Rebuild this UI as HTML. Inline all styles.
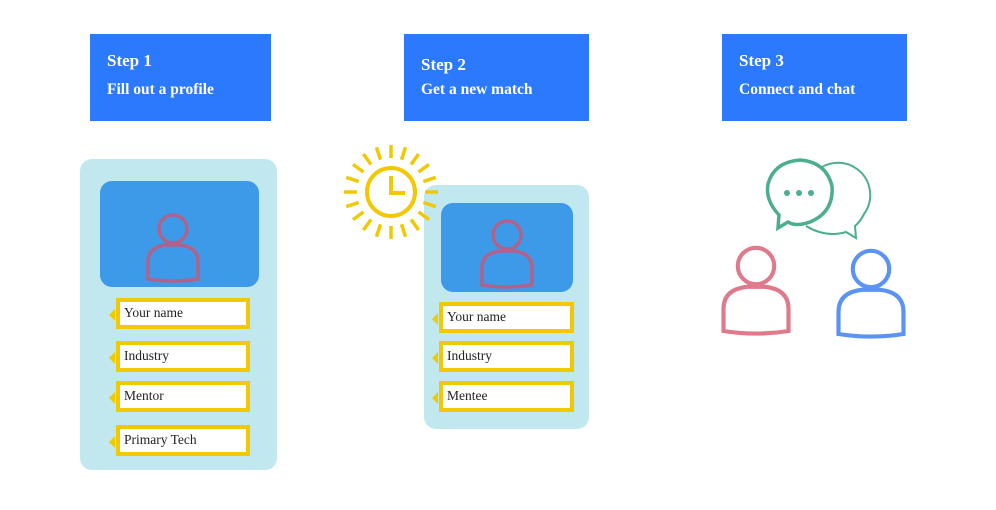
<!DOCTYPE html>
<html><head><meta charset="utf-8"><style>
body{margin:0;width:996px;height:510px;background:#fff;position:relative;overflow:hidden;font-family:"Liberation Serif",serif}
.step{position:absolute;background:#2B79FD;color:#fff;font-weight:bold;top:34px;height:87px}
.step .a{position:absolute;left:17px;font-size:17px}
.step .b{position:absolute;left:17px;font-size:15.5px}
.card{position:absolute;background:#C1E8EF;border-radius:12px}
.photo{position:absolute;background:#3D9AE8;border-radius:12px}
.f{position:absolute;background:#fff;border:4px solid #F2C800;box-sizing:border-box;font-size:13.5px;color:#222;padding-left:4px;line-height:22px}
.f:before{content:"";position:absolute;left:-11px;top:7px;border:6px solid transparent;border-right:6px solid #F2C800;border-left:0}
svg{position:absolute;left:0;top:0}
</style></head><body>
<div class="step" style="left:90px;width:181px"><div class="a" style="top:17px">Step 1</div><div class="b" style="top:47px">Fill out a profile</div></div>
<div class="step" style="left:404px;width:185px"><div class="a" style="top:21px">Step 2</div><div class="b" style="top:47px">Get a new match</div></div>
<div class="step" style="left:722px;width:185px"><div class="a" style="top:17px">Step 3</div><div class="b" style="top:47px">Connect and chat</div></div>

<div class="card" style="left:80px;top:159px;width:197px;height:311px"></div>
<div class="photo" style="left:100px;top:181px;width:159px;height:106px"></div>
<div class="f" style="left:116px;top:298px;width:134px;height:31px">Your name</div>
<div class="f" style="left:116px;top:341px;width:134px;height:31px">Industry</div>
<div class="f" style="left:116px;top:381px;width:134px;height:31px">Mentor</div>
<div class="f" style="left:116px;top:425px;width:134px;height:31px">Primary Tech</div>

<div class="card" style="left:424px;top:185px;width:165px;height:244px"></div>
<div class="photo" style="left:441px;top:203px;width:132px;height:89px"></div>
<div class="f" style="left:439px;top:302px;width:135px;height:31px">Your name</div>
<div class="f" style="left:439px;top:341px;width:135px;height:31px">Industry</div>
<div class="f" style="left:439px;top:381px;width:135px;height:31px">Mentee</div>

<svg width="996" height="510" viewBox="0 0 996 510" fill="none">
<defs><g id="p"><circle cx="0" cy="0" r="14"/><path d="M-25 50V33Q-25 18-7 16H7Q25 18 25 33V50Q0 54-25 50Z"/></g>
<line id="r" x1="391" y1="158" x2="391" y2="145"/></defs>
<use href="#p" transform="translate(173,229)" stroke="#B0628A" stroke-width="3.5"/>
<use href="#p" transform="translate(507,235)" stroke="#B0628A" stroke-width="3.5"/>
<use href="#p" transform="translate(756,266) scale(1.3)" stroke="#DE7A8C" stroke-width="3.2"/>
<use href="#p" transform="translate(871,269) scale(1.3)" stroke="#5B93F5" stroke-width="3.2"/>
<g stroke="#F2C800" stroke-width="4">
<circle cx="391" cy="192" r="24"/>
<path d="M391 176V193H405"/>
<g stroke-width="3.5">
<use href="#r" transform="rotate(0 391 192)"/><use href="#r" transform="rotate(18 391 192)"/>
<use href="#r" transform="rotate(36 391 192)"/><use href="#r" transform="rotate(54 391 192)"/>
<use href="#r" transform="rotate(72 391 192)"/><use href="#r" transform="rotate(90 391 192)"/>
<use href="#r" transform="rotate(108 391 192)"/><use href="#r" transform="rotate(126 391 192)"/>
<use href="#r" transform="rotate(144 391 192)"/><use href="#r" transform="rotate(162 391 192)"/>
<use href="#r" transform="rotate(180 391 192)"/><use href="#r" transform="rotate(198 391 192)"/>
<use href="#r" transform="rotate(216 391 192)"/><use href="#r" transform="rotate(234 391 192)"/>
<use href="#r" transform="rotate(252 391 192)"/><use href="#r" transform="rotate(270 391 192)"/>
<use href="#r" transform="rotate(288 391 192)"/><use href="#r" transform="rotate(306 391 192)"/>
<use href="#r" transform="rotate(324 391 192)"/><use href="#r" transform="rotate(342 391 192)"/>
</g></g>
<g stroke="#4BAE8C">
<path stroke-width="2" d="M812 176A31 31 0 0 1 864 214Q860 222 855 226L856 238L846 232Q826 238 806 226"/>
<path stroke-width="3.5" fill="#fff" d="M778 228L779 215Q765 200 768 184Q774 162 800 160Q826 162 832 186Q834 212 810 222Q796 227 788 222Z"/>
</g>
<g fill="#4BAE8C"><circle cx="787" cy="193" r="3"/><circle cx="799" cy="193" r="3"/><circle cx="811" cy="193" r="3"/></g>
</svg>
</body></html>
